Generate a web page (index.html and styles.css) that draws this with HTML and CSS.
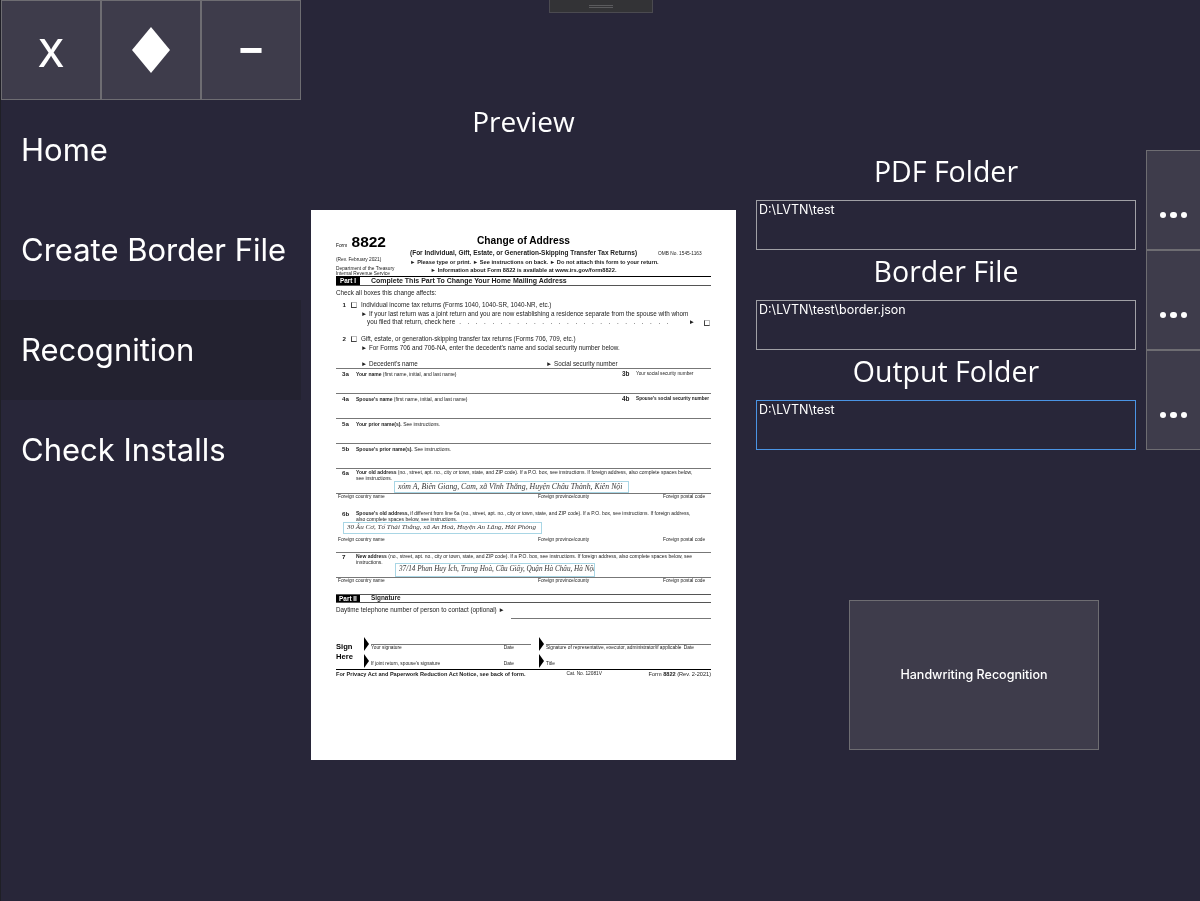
FILE: index.html
```html
<!DOCTYPE html>
<html lang="en">
<head>
    <meta charset="UTF-8">
    <meta name="viewport" content="width=device-width, initial-scale=1.0">
    <title>Handwriting Recognition</title>
    <link rel="stylesheet" href="styles.css">
</head>
<body>
    <div class="drag-handle"><span></span><span></span></div>

    <div class="app">
        <!-- left menu -->
        <div class="sidebar">
            <div class="window-buttons">
                <button class="win-btn win-close"><span class="gray-text">X</span></button>
                <button class="win-btn">
                    <svg width="38" height="46" viewBox="0 0 38 46"><polygon points="19,0 38,23 19,46 0,23" fill="#fff"/></svg>
                </button>
                <button class="win-btn win-min"><span class="gray-text">–</span></button>
            </div>
            <div class="nav-item"><span class="gray-text">Home</span></div>
            <div class="nav-item"><span class="gray-text">Create Border File</span></div>
            <div class="nav-item active"><span class="gray-text">Recognition</span></div>
            <div class="nav-item"><span class="gray-text">Check Installs</span></div>
        </div>

        <!-- preview -->
        <div class="preview">
            <div class="preview-title gray-text">Preview</div>
            <div class="form-page">
                <div class="f-head">
                    <div class="f-head-left">
                        <div class="f-number"><small>Form</small> 8822</div>
                        <div class="f-rev">(Rev. February 2021)</div>
                        <div class="f-dept">Department of the Treasury<br>Internal Revenue Service</div>
                    </div>
                    <div class="f-head-mid">
                        <div class="f-title">Change of Address</div>
                        <div class="f-sub">(For Individual, Gift, Estate, or Generation-Skipping Transfer Tax Returns)</div>
                        <div class="f-note">► Please type or print. ► See instructions on back. ► Do not attach this form to your return.</div>
                        <div class="f-note">► Information about Form 8822 is available at www.irs.gov/form8822.</div>
                    </div>
                    <div class="f-head-right">OMB No. 1545-1163</div>
                </div>

                <div class="f-part">
                    <span class="f-part-tag">Part I</span>
                    <span class="f-part-name">Complete This Part To Change Your Home Mailing Address</span>
                </div>
                <div class="f-check-all">Check all boxes this change affects:</div>

                <div class="f-item f-item-1">
                    <b class="f-num">1</b><i class="f-box"></i>
                    <div class="f-item-text">
                        <div>Individual income tax returns (Forms 1040, 1040-SR, 1040-NR, etc.)</div>
                        <div>► If your last return was a joint return and you are now establishing a residence separate from the spouse with whom</div>
                        <div class="f-leader"><span class="f-indent">you filed that return, check here</span><span class="f-dots">. . . . . . . . . . . . . . . . . . . . . . . . . .</span><span>►</span><i class="f-box f-box-end"></i></div>
                    </div>
                </div>
                <div class="f-item f-item-2">
                    <b class="f-num">2</b><i class="f-box"></i>
                    <div class="f-item-text">
                        <div>Gift, estate, or generation-skipping transfer tax returns (Forms 706, 709, etc.)</div>
                        <div>► For Forms 706 and 706-NA, enter the decedent's name and social security number below.</div>
                        <div class="f-names"><span>► Decedent's name</span><span>► Social security number</span></div>
                    </div>
                </div>

                <div class="f-row f-row-25">
                    <b class="f-num">3a</b><span class="f-grow"><b>Your name</b> (first name, initial, and last name)</span>
                    <b class="f-num-r">3b</b><span class="f-ssn">Your social security number</span>
                </div>
                <div class="f-row f-row-25">
                    <b class="f-num">4a</b><span class="f-grow"><b>Spouse's name</b> (first name, initial, and last name)</span>
                    <b class="f-num-r">4b</b><span class="f-ssn"><b>Spouse's social security number</b></span>
                </div>
                <div class="f-row f-row-25">
                    <b class="f-num">5a</b><span class="f-grow"><b>Your prior name(s).</b> See instructions.</span>
                </div>
                <div class="f-row f-row-25">
                    <b class="f-num">5b</b><span class="f-grow"><b>Spouse's prior name(s).</b> See instructions.</span>
                </div>

                <div class="f-block f-block-6a">
                    <b class="f-num">6a</b>
                    <div class="f-grow"><b>Your old address</b> (no., street, apt. no., city or town, state, and ZIP code). If a P.O. box, see instructions. If foreign address, also complete spaces below, see instructions.</div>
                </div>
                <div class="hand hand-6a"><span>xóm A, Biên Giang, Cam, xã Vĩnh Thắng, Huyện Châu Thành, Kiên Nội</span></div>
                <div class="f-foreign"><span>Foreign country name</span><span>Foreign province/county</span><span>Foreign postal code</span></div>

                <div class="f-block f-block-6b">
                    <b class="f-num">6b</b>
                    <div class="f-grow"><b>Spouse's old address,</b> if different from line 6a (no., street, apt. no., city or town, state, and ZIP code). If a P.O. box, see instructions. If foreign address, also complete spaces below, see instructions.</div>
                </div>
                <div class="hand hand-6b"><span>30 Âu Cơ, Tổ Thái Thắng, xã An Hoà, Huyện An Lãng, Hải Phòng</span></div>
                <div class="f-foreign f-foreign-6b"><span>Foreign country name</span><span>Foreign province/county</span><span>Foreign postal code</span></div>

                <div class="f-block f-block-7">
                    <b class="f-num">7</b>
                    <div class="f-grow"><b>New address</b> (no., street, apt. no., city or town, state, and ZIP code). If a P.O. box, see instructions. If foreign address, also complete spaces below, see instructions.</div>
                </div>
                <div class="hand hand-7"><span>37/14 Phan Huy Ích, Trung Hoà, Cầu Giấy, Quận Hà Châu, Hà Nội</span></div>
                <div class="f-foreign f-foreign-7"><span>Foreign country name</span><span>Foreign province/county</span><span>Foreign postal code</span></div>

                <div class="f-part f-part-2">
                    <span class="f-part-tag">Part II</span>
                    <span class="f-part-name">Signature</span>
                </div>
                <div class="f-phone"><span>Daytime telephone number of person to contact (optional) ►</span><i></i></div>

                <div class="f-sign">
                    <div class="f-sign-label">Sign<br>Here</div>
                    <div class="f-sign-fields">
                        <div class="f-sign-row f-sign-first">
                            <i class="f-arrow"></i>
                            <div class="f-sig f-sig-left"><span>Your signature</span><span>Date</span></div>
                            <i class="f-arrow"></i>
                            <div class="f-sig f-sig-right"><span>Signature of representative, executor, administrator/if applicable</span><span>Date</span></div>
                        </div>
                        <div class="f-sign-row">
                            <i class="f-arrow"></i>
                            <div class="f-sig f-sig-left f-sig-plain"><span>If joint return, spouse's signature</span><span>Date</span></div>
                            <i class="f-arrow"></i>
                            <div class="f-sig f-sig-right f-sig-plain"><span>Title</span></div>
                        </div>
                    </div>
                </div>
                <div class="f-foot">
                    <b>For Privacy Act and Paperwork Reduction Act Notice, see back of form.</b>
                    <span class="f-cat">Cat. No. 12081V</span>
                    <span>Form <b>8822</b> (Rev. 2-2021)</span>
                </div>
            </div>
        </div>

        <!-- paths and run button -->
        <div class="options">
            <div class="path-rows">
                <div class="path-fields">
                    <div class="path-label gray-text">PDF Folder</div>
                    <div class="path-box"><textarea class="path-input" readonly>D:\LVTN\test</textarea></div>
                    <div class="path-label gray-text">Border File</div>
                    <div class="path-box"><textarea class="path-input" readonly>D:\LVTN\test\border.json</textarea></div>
                    <div class="path-label gray-text">Output Folder</div>
                    <div class="path-box focused"><textarea class="path-input" readonly>D:\LVTN\test</textarea></div>
                </div>
                <div class="browse-buttons">
                    <button class="browse-btn"><i></i><i></i><i></i></button>
                    <button class="browse-btn"><i></i><i></i><i></i></button>
                    <button class="browse-btn"><i></i><i></i><i></i></button>
                </div>
            </div>
            <button class="run-btn"><span class="gray-text">Handwriting Recognition</span></button>
        </div>
    </div>
</body>
</html>
```

FILE: styles.css
```css
html, body {
    margin: 0;
    height: 100%;
}

body {
    position: relative;
    overflow: hidden;
    background: #282639;
    color: #fff;
    font-family: Inter, "Noto Sans", sans-serif;
}

button {
    font-family: inherit;
    color: #fff;
    cursor: pointer;
}

/* no coloured fringes on the text, the window draws it in plain grey */
.gray-text {
    filter: grayscale(1);
}

.drag-handle {
    position: absolute;
    top: -1px;
    left: 549px;
    width: 102px;
    height: 12px;
    border: 1px solid #4b4a50;
    background: #333336;
    display: flex;
    flex-direction: column;
    align-items: center;
    justify-content: center;
    gap: 1px;
}

.drag-handle span {
    width: 24px;
    height: 1px;
    background: #5b5b5e;
}

.app {
    display: flex;
    height: 901px;
    border-left: 1px solid #1f1f26;
}

/* left menu */
.sidebar {
    width: 300px;
    flex-shrink: 0;
}

.window-buttons {
    display: flex;
}

.win-btn {
    width: 100px;
    height: 100px;
    box-sizing: border-box;
    border: 1px solid #6e6d72;
    background: #3e3c4b;
    font-size: 39px;
    padding: 0;
    display: flex;
    align-items: center;
    justify-content: center;
}

.win-close {
    padding-top: 6px;
    font-size: 38px;
    font-weight: 500;
}

.win-min {
    font-size: 42px;
    font-weight: 700;
    padding-bottom: 6px;
}

.nav-item {
    height: 100px;
    box-sizing: border-box;
    padding: 0 0 1px 20px;
    display: flex;
    align-items: center;
    font-size: 31px;
    color: #fff;
}

.nav-item.active {
    background: #232230;
}

/* preview */
.preview {
    width: 425px;
    margin-left: 10px;
    flex-shrink: 0;
}

.preview-title {
    height: 110px;
    padding-top: 100px;
    box-sizing: border-box;
    text-align: center;
    font-family: "Open Sans", sans-serif;
    font-size: 28px;
    line-height: 42px;
}

.form-page {
    margin-top: 100px;
    width: 425px;
    height: 550px;
    box-sizing: border-box;
    padding: 24px 25px 0;
    background: #fff;
    color: #222;
    font-family: "Liberation Sans", Arial, sans-serif;
    font-size: 6.3px;
    line-height: 8.5px;
    overflow: hidden;
}

/* the page is a scaled down scan, so a little soft and without colour */
.form-page > :not(.hand),
.hand span {
    filter: grayscale(1) blur(0.25px);
}

.form-page i {
    font-style: normal;
}

.f-head {
    display: flex;
    height: 42px;
}

.f-head-left {
    width: 74px;
    flex-shrink: 0;
    font-size: 4.8px;
    line-height: 5px;
    white-space: nowrap;
}

.f-number {
    font-size: 15.5px;
    line-height: 15px;
    font-weight: 700;
    color: #000;
}

.f-number small {
    font-size: 4.8px;
    font-weight: 400;
}

.f-rev {
    margin-top: 4px;
}

.f-dept {
    margin-top: 4px;
}

.f-head-mid {
    width: 227px;
    margin-right: 21px;
    text-align: center;
    white-space: nowrap;
}

.f-title {
    font-size: 10.2px;
    line-height: 13px;
    font-weight: 700;
    color: #000;
}

.f-sub {
    font-size: 6.5px;
    line-height: 11px;
    font-weight: 700;
}

.f-note {
    font-size: 5.65px;
    line-height: 8px;
    font-weight: 700;
}

.f-head-right {
    padding-top: 16px;
    font-size: 4.8px;
    white-space: nowrap;
}

.f-part {
    display: flex;
    align-items: center;
    height: 10px;
    box-sizing: border-box;
    border-top: 1px solid #000;
    border-bottom: 1px solid #555;
}

.f-part-tag {
    width: 24px;
    height: 8px;
    line-height: 8px;
    background: #000;
    color: #fff;
    font-weight: 700;
    font-size: 6.4px;
    text-align: center;
}

.f-part-name {
    margin-left: 11px;
    font-size: 7px;
    font-weight: 700;
}

.f-check-all {
    height: 14px;
    line-height: 13px;
}

.f-item {
    display: flex;
    white-space: nowrap;
}

.f-item-1 {
    height: 35px;
    padding-top: 1px;
    box-sizing: border-box;
}

.f-item-2 {
    height: 33px;
}

.f-item > .f-num {
    width: 10px;
    padding-left: 0;
    text-align: right;
    flex-shrink: 0;
}

.f-box {
    display: inline-block;
    width: 6px;
    height: 6px;
    box-sizing: border-box;
    border: 1px solid #bbb;
    border-left-color: #444;
    border-bottom-color: #444;
    margin: 1px 4px 0 5px;
    flex-shrink: 0;
}

.f-box-end {
    margin: 2px 1px 0 9px;
}

.f-item-text {
    flex: 1;
    min-width: 0;
}

.f-leader {
    display: flex;
}

.f-indent {
    margin-left: 6px;
}

.f-dots {
    flex: 1;
    min-width: 0;
    margin: 0 10px 0 4px;
    letter-spacing: 2.4px;
}

.f-names {
    display: flex;
    margin-top: 8px;
}

.f-names span:first-child {
    width: 185px;
}

.f-row {
    display: flex;
    border-top: 1px solid #777;
    box-sizing: border-box;
    padding-top: 1px;
    font-size: 5px;
    line-height: 8px;
    white-space: nowrap;
}

.f-row-25 {
    height: 25px;
}

.f-num {
    width: 20px;
    flex-shrink: 0;
    font-size: 6.2px;
    padding-left: 6px;
    box-sizing: border-box;
}

.f-grow {
    flex: 1;
}

.f-num-r {
    width: 14px;
    font-size: 6.4px;
}

.f-ssn {
    width: 75px;
    font-size: 4.7px;
}

.f-block {
    display: flex;
    box-sizing: border-box;
    font-size: 5px;
    line-height: 5.5px;
}

.f-block .f-grow {
    max-width: 340px;
}

.f-block-6a {
    height: 13px;
    padding-top: 1px;
    border-top: 1px solid #777;
}

.f-block-6b {
    height: 11px;
    margin-top: 2px;
}

.f-block-7 {
    height: 11px;
    padding-top: 1px;
    border-top: 1px solid #777;
}

.hand {
    box-sizing: border-box;
    height: 12px;
    border: 1.5px solid #a9d6e5;
    font-family: "Liberation Serif", serif;
    font-style: italic;
    font-size: 7.8px;
    line-height: 9px;
    white-space: nowrap;
    padding-left: 3px;
    color: #333;
    overflow: hidden;
}

.hand span {
    display: inline-block;
}

.hand-6a {
    width: 235px;
    margin-left: 58px;
}

.hand-6b {
    width: 199px;
    margin-left: 7px;
    font-size: 7.1px;
}

.hand-7 {
    width: 200px;
    height: 14px;
    margin-left: 59px;
    font-size: 7.2px;
    line-height: 11px;
}

.f-foreign {
    display: flex;
    height: 16px;
    border-top: 1px solid #777;
    font-size: 4.8px;
    line-height: 5px;
    padding-left: 2px;
    box-sizing: border-box;
}

.f-foreign-6b {
    height: 18px;
    border-top: none;
    padding-top: 3px;
}

.f-foreign-7 {
    height: 17px;
}

.f-foreign span:nth-child(1) {
    width: 200px;
}

.f-foreign span:nth-child(2) {
    width: 125px;
}

.f-part-2 {
    height: 9px;
    border-top-color: #555;
}

.f-part-2 .f-part-name {
    font-size: 6.4px;
}

.f-part-2 .f-part-tag {
    height: 7px;
    line-height: 7px;
}

.f-phone {
    height: 16px;
    line-height: 14px;
    position: relative;
    white-space: nowrap;
}

.f-phone i {
    display: block;
    position: absolute;
    left: 175px;
    right: 0;
    bottom: 0;
    height: 1px;
    background: #777;
}

.f-sign {
    display: flex;
    margin-top: 18px;
    height: 32px;
    box-sizing: border-box;
}

.f-sign-label {
    width: 28px;
    flex-shrink: 0;
    padding-top: 5px;
    font-size: 7.6px;
    line-height: 10px;
    font-weight: 700;
    color: #000;
}

.f-sign-fields {
    flex: 1;
}

.f-sign-row {
    display: flex;
    height: 15px;
    font-size: 4.8px;
    line-height: 5px;
}

.f-sign-first {
    height: 17px;
}

/* the black pointer at the start of a signature box */
.f-arrow {
    width: 0;
    height: 0;
    flex-shrink: 0;
    border-left: 5px solid #000;
    border-top: 7px solid transparent;
    border-bottom: 7px solid transparent;
    margin-right: 2px;
}

.f-sig {
    display: flex;
    justify-content: space-between;
    box-sizing: border-box;
    white-space: nowrap;
}

.f-sign-first .f-sig {
    height: 8px;
    margin-top: 7px;
    border-top: 1px solid #777;
}

.f-sig-left {
    width: 160px;
    margin-right: 8px;
    padding-right: 17px;
}

.f-sig-right {
    flex: 1;
    padding-right: 17px;
}

.f-sig-plain {
    padding-top: 7px;
}

.f-sign-row:last-child .f-sig-right {
    padding-right: 0;
}

.f-foot {
    display: flex;
    border-top: 1px solid #000;
    font-size: 5.6px;
    line-height: 8px;
    white-space: nowrap;
}

.f-cat {
    margin: 0 auto 0 41px;
    font-size: 4.8px;
}

/* right side */
.options {
    margin-left: 20px;
    flex: 1;
    padding-top: 150px;
}

.path-rows {
    display: flex;
}

.path-fields {
    width: 380px;
}

.path-label {
    height: 50px;
    text-align: center;
    font-family: "Open Sans", sans-serif;
    font-size: 28.5px;
    line-height: 42px;
}

.path-box {
    height: 50px;
    box-sizing: border-box;
    border: 1px solid #a0a0a5;
}

.path-box.focused {
    border-color: #4a94e4;
}

.path-input {
    display: block;
    width: 100%;
    height: 48px;
    box-sizing: border-box;
    margin: 0;
    padding: 1px 2px;
    resize: none;
    outline: none;
    background: transparent;
    border: none;
    color: #fff;
    font-family: Inter, sans-serif;
    font-size: 12.5px;
    line-height: 16px;
    filter: grayscale(1);
}

.browse-buttons {
    width: 54px;
    margin-left: 10px;
    flex-shrink: 0;
}

.browse-btn {
    display: flex;
    align-items: center;
    justify-content: center;
    gap: 4px;
    width: 54px;
    height: 100px;
    box-sizing: border-box;
    padding: 30px 0 0;
    border: 1px solid #6e6d72;
    border-right: none;
    background: #3e3c4b;
}

.browse-btn i {
    width: 6.5px;
    height: 6.5px;
    border-radius: 50%;
    background: #fff;
}

.run-btn {
    display: block;
    width: 250px;
    height: 150px;
    margin: 150px 0 0 93px;
    padding: 0 0 2px;
    box-sizing: border-box;
    border: 1px solid #6e6d72;
    background: #3e3c4b;
    font-size: 12.5px;
    font-weight: 500;
}
```
